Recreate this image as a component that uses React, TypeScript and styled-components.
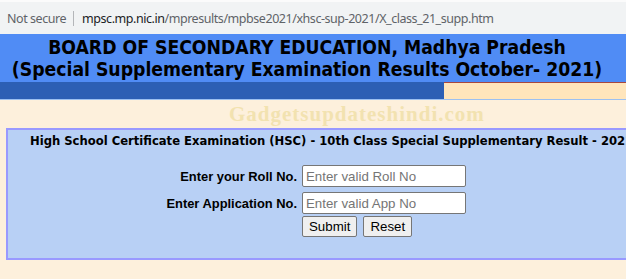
import styled, { createGlobalStyle } from "styled-components"

const Global = createGlobalStyle`
    html, body {
        margin: 0;
        padding: 0;
        background: #fdf0dc;
        overflow: hidden;
    }
`;

const AddressBar = styled.div`
    height: 34px;
    background: #f1f3f4;
    border-top: 2px solid #fbfbfb;
    box-sizing: border-box;
    display: flex;
    align-items: center;
    padding-left: 7px;
    font-family: "Noto Sans", Roboto, sans-serif;
    font-size: 12.5px;
    letter-spacing: -0.45px;
    white-space: nowrap;
`;

const NotSecure = styled.span`
    color: #5f6368;
`;

const Divider = styled.span`
    width: 1px;
    height: 15px;
    background: #b4b6b9;
    margin: 0 8px 0 7px;
`;

const Url = styled.span`
    color: #5f6368;

    & b {
        color: #202124;
        font-weight: normal;
    }
`;

const Banner = styled.div`
    background: #508cf5;
    height: 48px;
    box-sizing: border-box;
    padding-top: 3px;
    padding-right: 12px;
    text-align: center;
    font-family: "DejaVu Sans Condensed", "DejaVu Sans", sans-serif;
    font-stretch: condensed;
    font-weight: bold;
    font-size: 19.2px;
    line-height: 22px;
    color: #000;
    white-space: nowrap;
`;

const StripRow = styled.div`
    display: flex;
    height: 17px;
    border-bottom: 1px solid #9cc0f0;
`;

const StripCell = styled.div<{ $tone: "dark" | "light" }>`
    height: 100%;
    box-sizing: border-box;
    ${p => p.$tone === "dark"
        ? `width: 444px; background: #2c5fb4;`
        : `flex: 1; background: #ffe5bb; border-top: 1px solid #a8473f;`}
`;

const Watermark = styled.div`
    height: 28px;
    padding-left: 229px;
    font-family: "Liberation Serif", "Times New Roman", serif;
    font-weight: bold;
    font-size: 21px;
    letter-spacing: 1px;
    line-height: 28px;
    color: #f2e2b0;
`;

const ResultBox = styled.div`
    margin-left: 6px;
    width: 680px;
    height: 132px;
    box-sizing: border-box;
    background: #b8d0f5;
    border: 2px solid #9999ff;
`;

const BoxTitle = styled.div`
    padding: 4px 0 0 22px;
    font-family: "DejaVu Sans Condensed", "DejaVu Sans", sans-serif;
    font-stretch: condensed;
    font-weight: bold;
    font-size: 12.9px;
    line-height: 14px;
    white-space: nowrap;
    color: #000;
`;

const Form = styled.form`
    display: grid;
    grid-template-columns: 289px 164px;
    column-gap: 5px;
    row-gap: 5px;
    margin-top: 17px;
    align-items: center;
`;

const Label = styled.label`
    text-align: right;
    font-family: "Liberation Sans", Arial, sans-serif;
    font-weight: bold;
    font-size: 12.9px;
    color: #000;
`;

const Input = styled.input`
    box-sizing: border-box;
    width: 164px;
    height: 22px;
    border: 1px solid #767676;
    border-radius: 2px;
    padding: 1px 3px;
    font-family: "Liberation Sans", Arial, sans-serif;
    font-size: 13.3px;
    background: #fff;

    &::placeholder {
        color: #757575;
    }
`;

const Buttons = styled.div`
    grid-column: 2;
    display: flex;
    gap: 6px;
    margin-top: -3px;
`;

const Button = styled.button`
    height: 21px;
    padding: 0 6px;
    border: 1px solid #767676;
    border-radius: 2px;
    background: #efefef;
    font-family: "Liberation Sans", Arial, sans-serif;
    font-size: 13.3px;
    color: #000;
`;

const App = () => {
    return (
        <>
            <Global />
            <AddressBar>
                <NotSecure>Not secure</NotSecure>
                <Divider />
                <Url><b>mpsc.mp.nic.in</b>/mpresults/mpbse2021/xhsc-sup-2021/X_class_21_supp.htm</Url>
            </AddressBar>
            <Banner>
                BOARD OF SECONDARY EDUCATION, Madhya Pradesh<br />
                (Special Supplementary Examination Results October- 2021)
            </Banner>
            <StripRow>
                <StripCell $tone="dark" />
                <StripCell $tone="light" />
            </StripRow>
            <Watermark>Gadgetsupdateshindi.com</Watermark>
            <ResultBox>
                <BoxTitle>High School Certificate Examination (HSC) - 10th Class Special Supplementary Result - 2021</BoxTitle>
                <Form onSubmit={e => e.preventDefault()}>
                    <Label>Enter your Roll No.</Label>
                    <Input placeholder="Enter valid Roll No" />
                    <Label>Enter Application No.</Label>
                    <Input placeholder="Enter valid App No" />
                    <Buttons>
                        <Button type="submit">Submit</Button>
                        <Button type="reset">Reset</Button>
                    </Buttons>
                </Form>
            </ResultBox>
        </>
    )
}

export default App;
